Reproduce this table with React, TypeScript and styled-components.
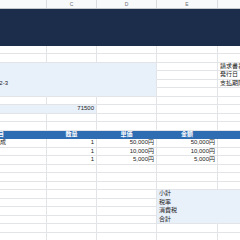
import styled, { createGlobalStyle } from 'styled-components';

const GlobalStyle = createGlobalStyle`
  html, body {
    margin: 0;
    padding: 0;
    background: #fff;
  }
  body {
    font-family: "Liberation Sans", "Noto Sans CJK JP", sans-serif;
  }
`;

const colors = {
	line: '#e2e4e8',
	soft: '#e8f0fa',
	head: '#2f6db3',
	navy: '#1c2d4b',
	text: '#222',
};

// columns B..F, sheet scrolled so that B starts left of the window
const colWidths = [97, 50, 60, 61, 80];
const template = colWidths.map(w => `${w}px`).join(' ');
const sheetWidth = colWidths.reduce((a, b) => a + b, 0);

type Tone = 'soft' | 'head';
type CellSpec = {
	text?: string;
	align?: 'left' | 'center' | 'right';
	tone?: Tone;
	joinRight?: boolean;
	joinDown?: boolean;
};

const Viewport = styled.div`
	width: 240px;
	height: 240px;
	overflow: hidden;
`;

const Sheet = styled.div`
	margin-left: -50px;
	width: ${sheetWidth}px;
	display: flex;
	flex-direction: column;
`;

const ColHeads = styled.div`
	display: grid;
	grid-template-columns: ${template};
	height: 9px;
	box-sizing: border-box;
	background: #f8f9fa;
	border-bottom: 1px solid #c4c7cc;
`;

const ColHead = styled.div`
	border-right: 1px solid #dadce0;
	font-size: 5px;
	line-height: 8px;
	color: #6b6f75;
	text-align: center;
`;

const Banner = styled.div`
	height: 36.5px;
	background: ${colors.navy};
`;

const Row = styled.div<{ $tone?: Tone }>`
	display: grid;
	grid-template-columns: ${template};
	height: 8.5px;
	background: ${p => (p.$tone === 'head' ? colors.head : 'transparent')};
`;

const fillOf = (tone?: Tone) =>
	tone === 'soft' ? colors.soft : tone === 'head' ? colors.head : 'transparent';

const Cell = styled.div<{ $tone?: Tone; $align?: string; $joinRight?: boolean; $joinDown?: boolean }>`
	box-sizing: border-box;
	padding: 0 2px;
	background: ${p => fillOf(p.$tone)};
	border-right: 1px solid ${p => (p.$tone && (p.$joinRight || p.$tone === 'head') ? fillOf(p.$tone) : colors.line)};
	border-bottom: 1px solid ${p => (p.$tone && (p.$joinDown || p.$tone === 'head') ? fillOf(p.$tone) : colors.line)};
	font-size: 6px;
	line-height: 7.5px;
	font-weight: ${p => (p.$tone === 'head' ? 700 : 400)};
	color: ${p => (p.$tone === 'head' ? '#fff' : colors.text)};
	text-align: ${p => p.$align || 'left'};
	white-space: nowrap;
`;

const empty: CellSpec[] = [{}, {}, {}, {}, {}];
const addr = (text?: string, last = false): CellSpec[] => [
	{ tone: 'soft', joinRight: true, joinDown: !last, text },
	{ tone: 'soft', joinRight: true, joinDown: !last },
	{ tone: 'soft', joinDown: !last },
];
const item = (name: string, qty: string, price: string): CellSpec[] => [
	{ text: name },
	{ text: qty, align: 'right' },
	{ text: price, align: 'right' },
	{ text: price, align: 'right' },
	{},
];
const total = (label: string, last = false): CellSpec[] => [
	{}, {}, {},
	{ tone: 'soft', text: label, joinRight: true, joinDown: !last },
	{ tone: 'soft', joinDown: !last },
];

const rows: { tone?: Tone; cells: CellSpec[] }[] = [
	{ cells: empty },
	{ cells: empty },
	{ cells: [...addr(), {}, { text: '請求書番号' }] },
	{ cells: [...addr(), {}, { text: '発行日' }] },
	{ cells: [...addr('東京都千代田区1-2-3'), {}, { text: '支払期限' }] },
	{ cells: [...addr(undefined, true), {}, {}] },
	{ cells: empty },
	{ cells: [{ tone: 'soft', joinRight: true }, { tone: 'soft', text: '71500', align: 'right' }, {}, {}, {}] },
	{ cells: empty },
	{ cells: empty },
	{
		tone: 'head',
		cells: ['品目', '数量', '単価', '金額', ''].map(t => ({ text: t, tone: 'head' as Tone, align: 'center' as const })),
	},
	{ cells: item('サイトデザイン作成', '1', '50,000円') },
	{ cells: item('サーバー構築', '1', '10,000円') },
	{ cells: item('保守費用', '1', '5,000円') },
	{ cells: empty },
	{ cells: empty },
	{ cells: empty },
	{ cells: total('小計') },
	{ cells: total('税率') },
	{ cells: total('消費税') },
	{ cells: total('合計', true) },
	{ cells: empty },
	{ cells: empty },
];

export default function App() {
	return (
		<Viewport>
			<GlobalStyle />
			<Sheet>
				<ColHeads>
					{['B', 'C', 'D', 'E', 'F'].map(l => (
						<ColHead key={l}>{l}</ColHead>
					))}
				</ColHeads>
				<Banner />
				{rows.map((r, i) => (
					<Row key={i} $tone={r.tone}>
						{r.cells.map((c, j) => (
							<Cell
								key={j}
								$tone={c.tone}
								$align={c.align}
								$joinRight={c.joinRight}
								$joinDown={c.joinDown}
							>
								{c.text}
							</Cell>
						))}
					</Row>
				))}
			</Sheet>
		</Viewport>
	);
}
